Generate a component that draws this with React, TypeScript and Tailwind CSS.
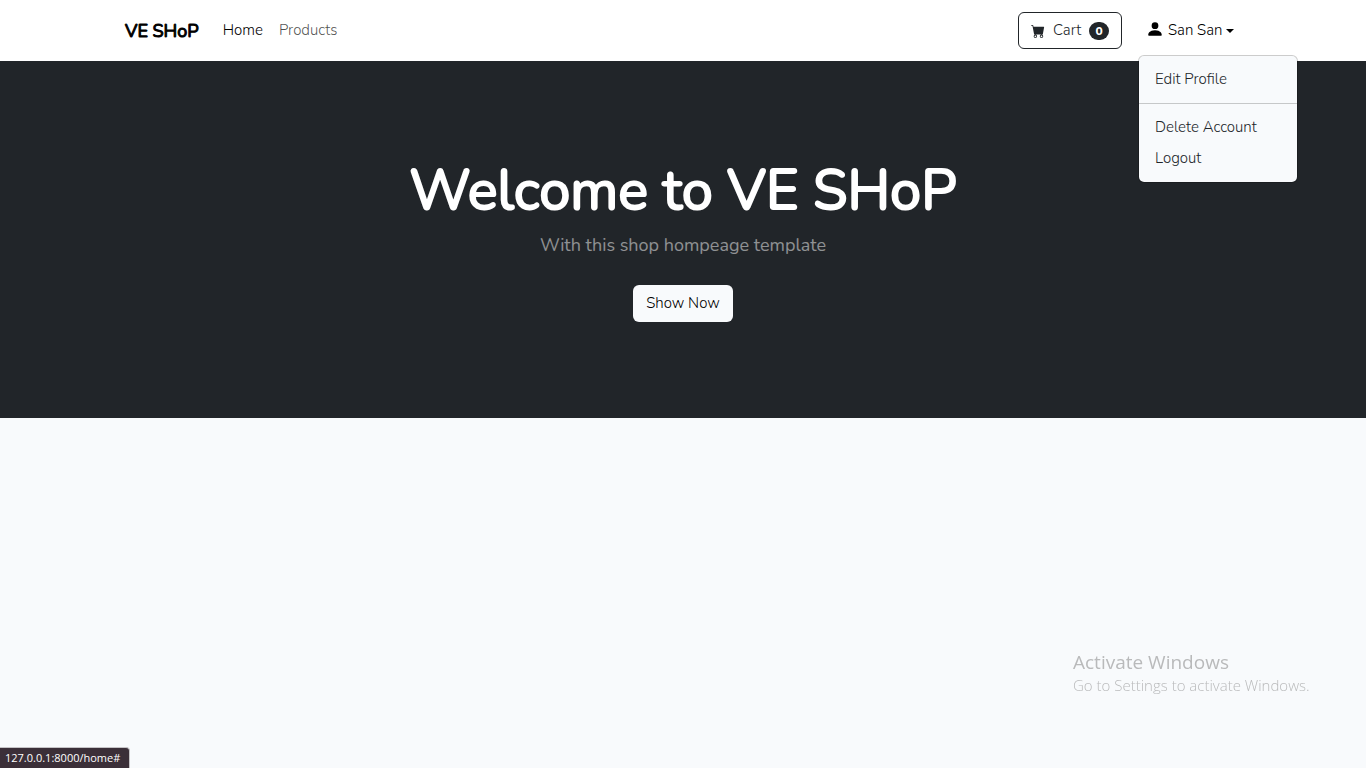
import { BsCartFill, BsPersonFill } from "react-icons/bs";

function Navbar() {
  return (
    <nav className="bg-white py-3">
      <div className="mx-auto flex h-[37px] max-w-[1164px] items-center px-6">
        <a href="#" className="mr-6 text-lg leading-6 font-normal text-black [-webkit-text-stroke:1px_black]">
          VE SHoP
        </a>
        <ul className="flex flex-1 items-center gap-4">
          <li>
            <a href="#" className="text-black">Home</a>
          </li>
          <li>
            <a href="#" className="text-black/70">Products</a>
          </li>
        </ul>
        <button
          type="button"
          className="mr-6 flex h-[37px] w-[104px] items-center rounded-md border border-[#212529] px-3 text-[#212529]"
        >
          <BsCartFill className="mr-2 size-3.5" />
          <span>Cart</span>
          <span className="ml-auto flex h-[18px] w-5 items-center justify-center rounded-full bg-[#212529] text-xs font-extrabold text-white">
            0
          </span>
        </button>
        <AccountMenu />
      </div>
    </nav>
  );
}

function AccountMenu() {
  return (
    <div className="relative w-[95px]">
      <button type="button" aria-expanded="true" className="flex items-center text-black">
        <BsPersonFill className="mr-1 mb-1 size-[18px]" />
        <span>San San</span>
        <span className="ml-1 border-x-4 border-t-4 border-x-transparent border-t-black" />
      </button>
      <ul className="absolute top-9 -left-2 z-10 w-40 rounded-md border border-black/20 bg-[#f8fafc] bg-clip-padding py-2 text-[#212529]">
        <li>
          <a href="#" className="block px-4 py-1">Edit Profile</a>
        </li>
        <li className="my-2 border-t border-black/20" />
        <li>
          <a href="#" className="block px-4 py-1">Delete Account</a>
        </li>
        <li>
          <a href="#" className="block px-4 py-1">Logout</a>
        </li>
      </ul>
    </div>
  );
}

function Hero() {
  return (
    <header className="bg-[#212529] px-4 py-24 text-center">
      <h1 className="mb-1 text-[56px] leading-[68px] font-normal text-white [-webkit-text-stroke:2px_white]">
        Welcome to VE SHoP
      </h1>
      <p className="mb-6 text-lg leading-8 font-normal text-white/50">With this shop hompeage template</p>
      <button type="button" className="h-[37px] rounded-md bg-[#f8fafc] px-[13px] text-black">
        Show Now
      </button>
    </header>
  );
}

export default function App() {
  return (
    <div className="min-h-screen bg-[#f8fafc] font-['Nunito','Lato',sans-serif] text-[15px] leading-[23px] font-light">
      <Navbar />
      <Hero />
      <aside className="fixed right-[57px] bottom-[72px] w-[236px] font-['Segoe_UI','Open_Sans',sans-serif] text-[#b9babb]">
        <p className="text-[19px] leading-6 font-normal">Activate Windows</p>
        <p className="text-[15px] leading-[22px] whitespace-nowrap">Go to Settings to activate Windows.</p>
      </aside>
      <div className="fixed bottom-0 left-0 w-[130px] rounded-tr border-t border-r border-[#c5c3c6] bg-[#3b2f38] px-[5px] font-['Segoe_UI','Open_Sans',sans-serif] text-[11px] leading-5 font-normal text-white">
        127.0.0.1:8000/home#
      </div>
    </div>
  );
}
